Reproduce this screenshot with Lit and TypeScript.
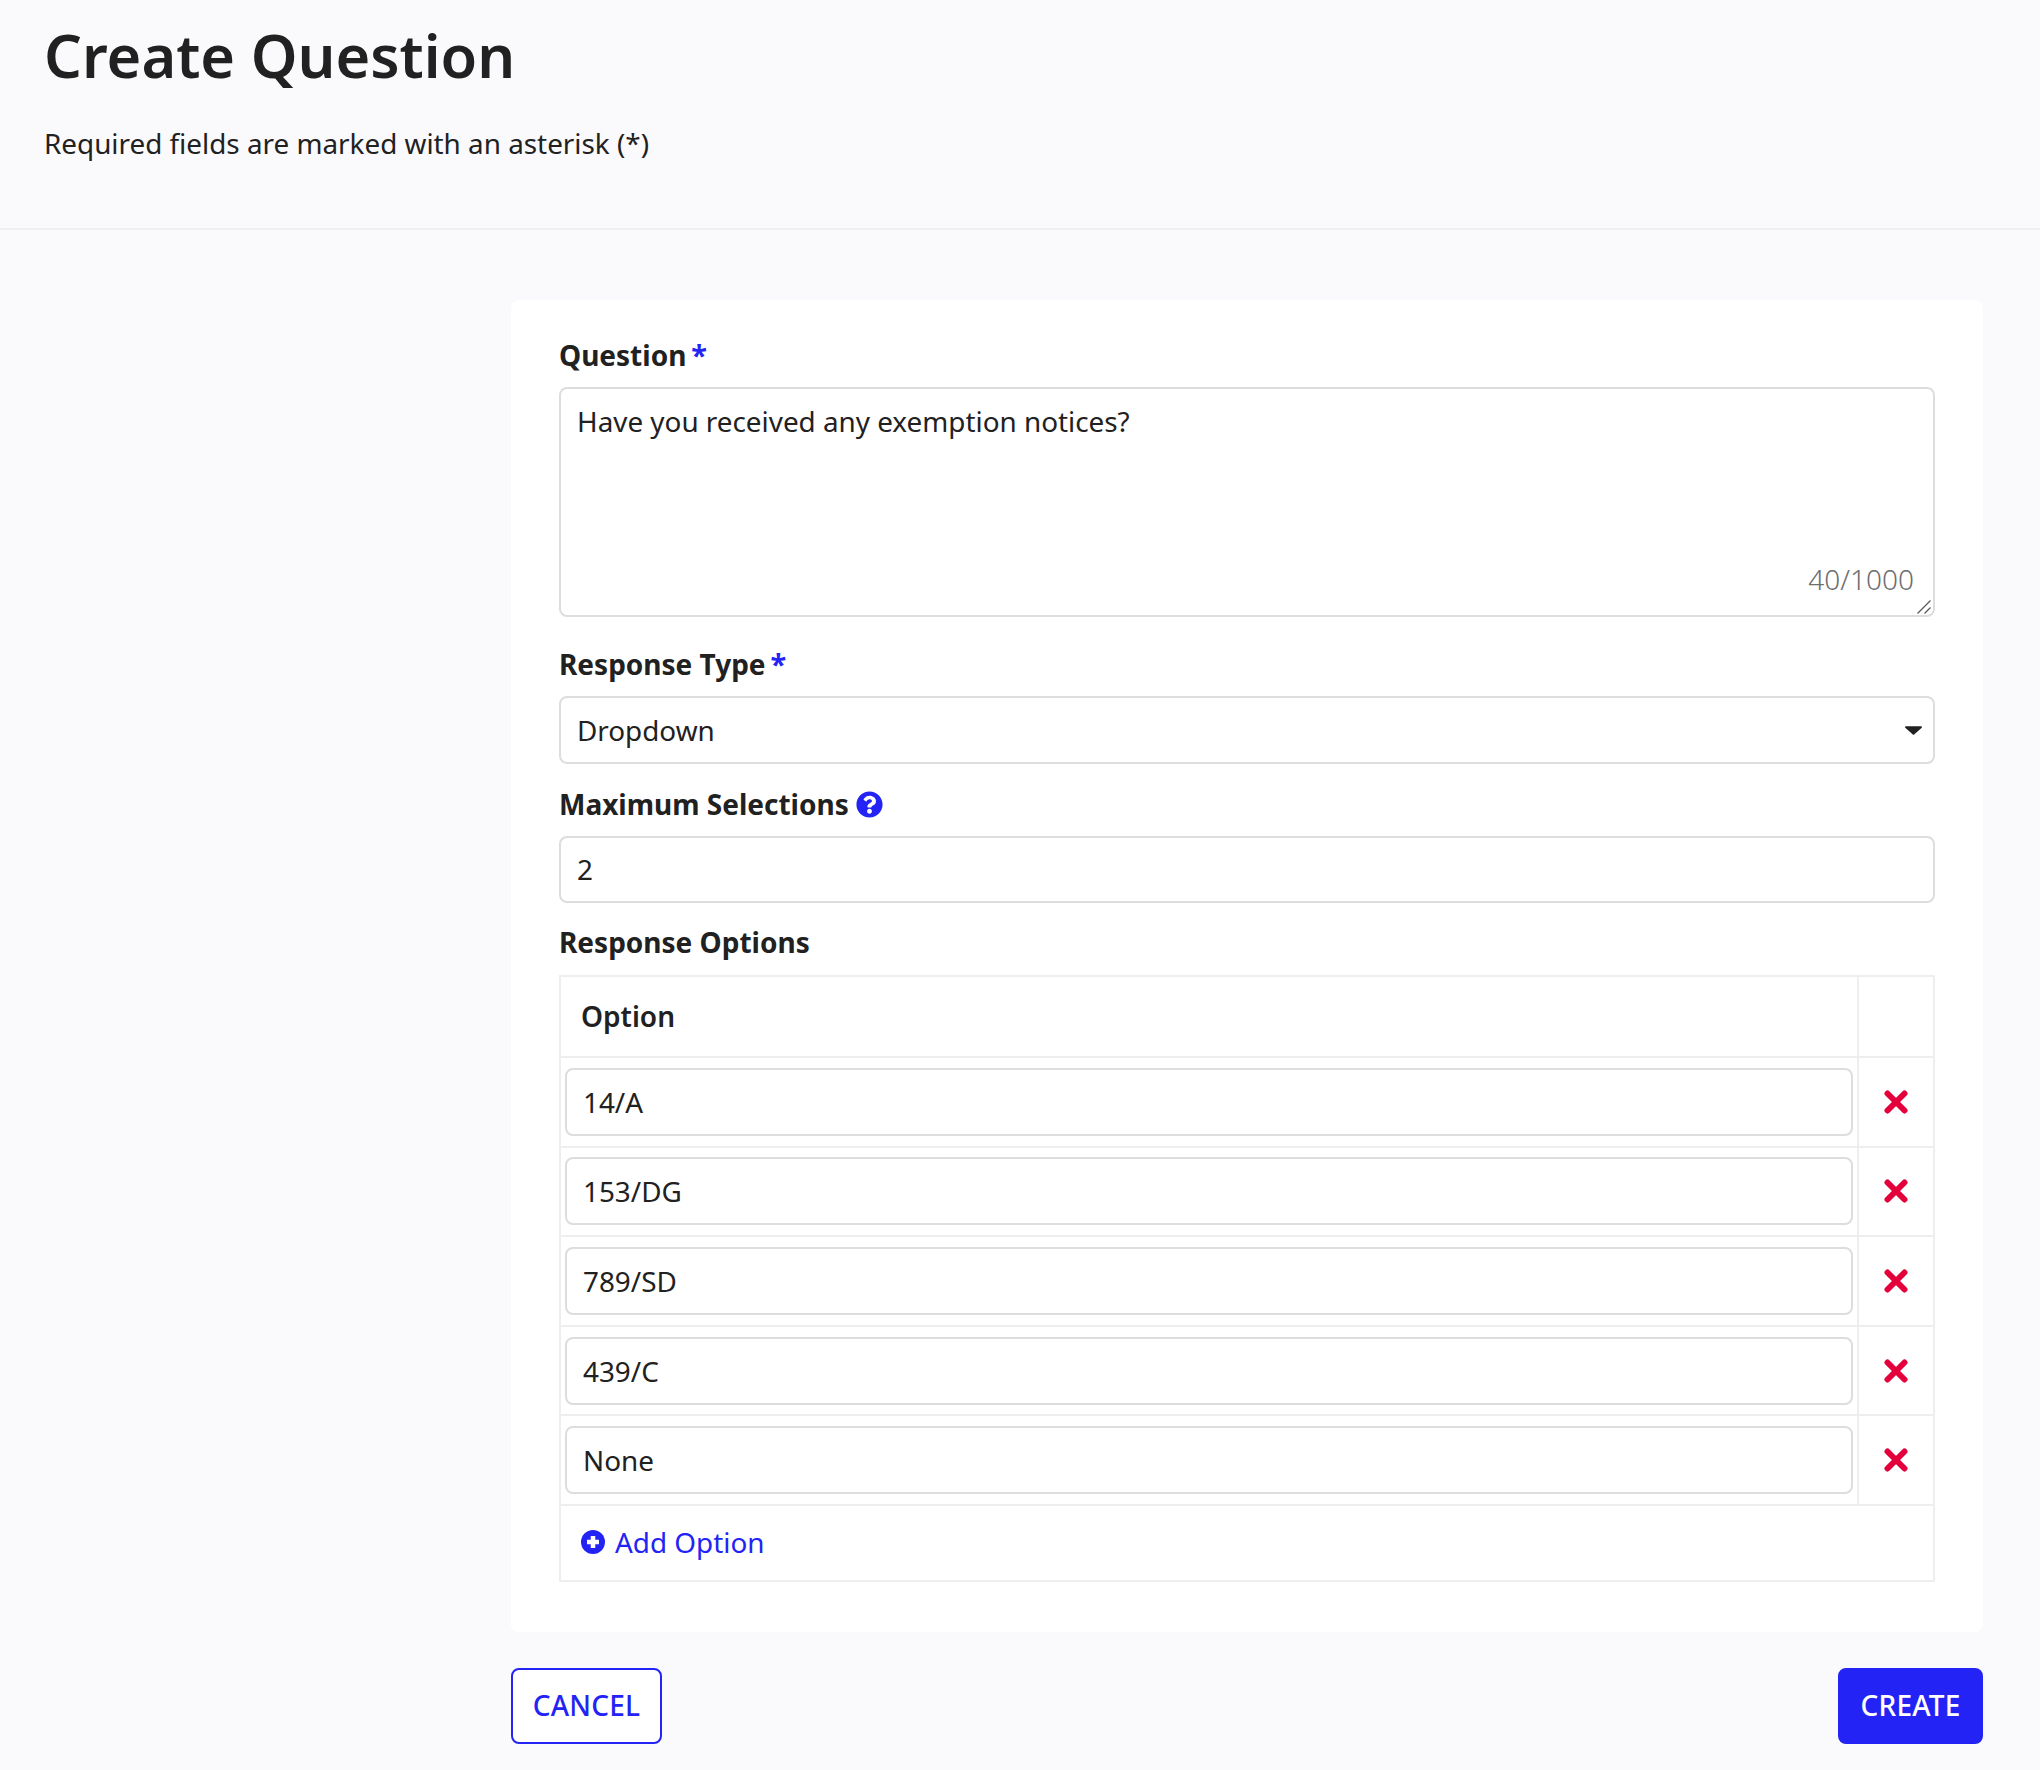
import { LitElement, html, css } from "lit";
import { customElement } from "lit/decorators.js";

const OPTIONS = ["14/A", "153/DG", "789/SD", "439/C", "None"];

@customElement("app-root")
export class AppRoot extends LitElement {
  static styles = css`
    :host { display: block; min-height: 1770px; background: #fafafc; font-family: "Noto Sans", "Open Sans", sans-serif; color: #212121; font-size: 27.85px; }
    * { box-sizing: border-box; }
    .header { height: 230px; padding: 20px 44px 0; border-bottom: 2px solid #eeeff1; }
    h1 { margin: 0; font-size: 59.5px; font-weight: 600; line-height: 70px; }
    .sub { margin: 33px 0 0; line-height: 40px; }
    .main { width: 1472px; margin: 70px 57px 0 auto; }
    .card { background: #fff; border-radius: 8px; padding: 37px 48px 50px; }
    .label { display: flex; align-items: center; gap: 7px; height: 36px; font-size: 28px; font-weight: 700; line-height: 36px; margin-bottom: 14px; }
    .label.opts { margin-bottom: 15px; }
    .star { color: #2323f5; font-weight: 700; margin-left: -2px; font-size: 29px; }
    .field { margin-bottom: 22px; }
    .field.first { margin-bottom: 29px; }
    .field.tight { margin-bottom: 21px; }
    .ta-wrap { position: relative; height: 230px; }
    textarea, input, select { font: inherit; color: inherit; display: block; width: 100%; background: #fff; border: 2px solid #ddd; border-radius: 8px; outline: none; }
    textarea { height: 230px; padding: 14px 16px; line-height: 36px; resize: none; }
    .count { position: absolute; right: 21px; bottom: 18px; color: #6e6e6e; font-size: 28px; font-weight: 300; line-height: 40px; }
    .grip { position: absolute; right: 4px; bottom: 3px; width: 14px; height: 14px; }
    input, select { height: 68px; padding: 0 16px; }
    input.max { height: 67px; padding-bottom: 2px; }
    .sel-wrap { position: relative; }
    select { appearance: none; }
    .caret { position: absolute; right: 13px; top: 30px; width: 17px; height: 9px; }
    table { width: 100%; border-collapse: collapse; table-layout: fixed; }
    td, th { border: 2px solid #eee; padding: 0; }
    th { height: 81px; text-align: left; padding: 0 0 1px 20px; font-size: 28px; font-weight: 600; }
    .x-col { width: 76px; }
    .row td { height: 89.6px; }
    .row td:first-child { padding: 0 4px; }
    .x { display: block; width: 24px; height: 24px; margin: 0 auto; }
    .add { height: 76px; padding: 0 0 1px 20px; }
    .add-in { display: flex; align-items: center; gap: 10px; color: #2323f5; }
    .add-in svg { width: 24px; height: 24px; }
    .help { width: 27px; height: 27px; }
    .actions { display: flex; justify-content: space-between; margin-top: 36px; }
    button { font: inherit; font-size: 28px; letter-spacing: 0.2px; font-weight: 500; height: 76px; border-radius: 8px; border: 2px solid #2323f5; padding: 0 0 1px; text-transform: uppercase; }
    .cancel { width: 151px; background: #fff; color: #2323f5; }
    .create { width: 145px; background: #2323f5; color: #fff; }
  `;

  render() {
    return html`
      <div class="header">
        <h1>Create Question</h1>
        <p class="sub">Required fields are marked with an asterisk (*)</p>
      </div>
      <div class="main">
        <div class="card">
          <div class="field first">
            <div class="label">Question <span class="star">*</span></div>
            <div class="ta-wrap">
              <textarea .value=${"Have you received any exemption notices?"}></textarea>
              <span class="count">40/1000</span>
              <svg class="grip" viewBox="0 0 14 14"><path d="M0.500 13.500L13.500 0.500M7.500 13.500L13.500 7.500" stroke="#555" stroke-width="1.200" fill="none"/></svg>
            </div>
          </div>
          <div class="field">
            <div class="label">Response Type <span class="star">*</span></div>
            <div class="sel-wrap">
              <select><option>Dropdown</option></select>
              <svg class="caret" viewBox="0 0 18 9"><path d="M1 0h16a1 1 0 0 1 .7 1.700L9.700 8.700a1 1 0 0 1-1.400 0L.3 1.700A1 1 0 0 1 1 0z" fill="#212121"/></svg>
            </div>
          </div>
          <div class="field tight">
            <div class="label">Maximum Selections
              <svg class="help" viewBox="0 0 512 512"><path fill="#2323f5" d="M504 256c0 137-111 248-248 248S8 393 8 256 119 8 256 8s248 111 248 248zM262.700 90c-54.500 0-89.300 23-116.500 63.800-3.500 5.300-2.400 12.400 2.700 16.300l34.700 26.300c5.200 3.900 12.600 3 16.700-2.100 17.900-22.700 30.100-35.800 57.300-35.800 20.400 0 45.700 13.100 45.700 32.900 0 15-12.400 22.700-32.500 34C247.100 238.500 216 254.900 216 296v4c0 6.600 5.400 12 12 12h56c6.600 0 12-5.400 12-12v-1.300c0-28.500 83.200-29.700 83.200-106.700 0-58-60.200-102-116.500-102zM256 338c-25.400 0-46 20.600-46 46s20.600 46 46 46 46-20.600 46-46-20.600-46-46-46z"/></svg>
            </div>
            <input class="max" .value=${"2"} />
          </div>
          <div class="label opts">Response Options</div>
          <table>
            <thead><tr><th>Option</th><th class="x-col"></th></tr></thead>
            <tbody>
              ${OPTIONS.map((o) => html`
                <tr class="row">
                  <td><input .value=${o} /></td>
                  <td><svg class="x" viewBox="0 0 24 24"><path d="M3.500 3.500l17 17M20.500 3.500l-17 17" stroke="#e4003a" stroke-width="6" stroke-linecap="round"/></svg></td>
                </tr>`)}
              <tr><td class="add" colspan="2">
                <span class="add-in">
                  <svg viewBox="0 0 24 24"><circle cx="12" cy="12" r="12" fill="#2323f5"/><path d="M12 6v12M6 12h12" stroke="#fff" stroke-width="4.500"/></svg>
                  Add Option
                </span>
              </td></tr>
            </tbody>
          </table>
        </div>
        <div class="actions">
          <button class="cancel">Cancel</button>
          <button class="create">Create</button>
        </div>
      </div>
    `;
  }
}
